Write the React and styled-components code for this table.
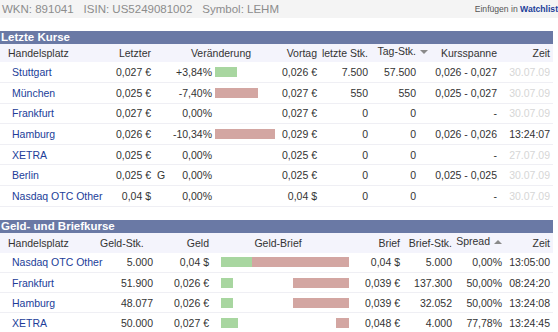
import React from 'react';
import styled, { createGlobalStyle } from 'styled-components';

const GlobalStyle = createGlobalStyle`
  body {
    margin: 0;
    background: #fff;
    font-family: "Liberation Sans", Arial, sans-serif;
    font-size: 10.5px;
    color: #333;
  }
`;

const Page = styled.div`
  width: 558px;
  overflow: hidden;
`;

const TopBar = styled.div`
  display: flex;
  align-items: center;
  justify-content: space-between;
  height: 18px;
  background: #f4f4f4;
  padding-left: 2px;
`;

const Ident = styled.div`
  display: flex;
  gap: 10px;
  color: #8c8c8c;
  font-size: 11.5px;
`;

const Watch = styled.div`
  font-size: 8.6px;
  color: #555;
  white-space: nowrap;
  b {
    color: #213d99;
  }
`;

const Section = styled.section`
  width: 553px;
  margin-top: 13px;
`;

const Band = styled.div`
  height: 13px;
  line-height: 13px;
  background: #6a79a5;
  color: #fff;
  font-weight: bold;
  font-size: 11.5px;
  padding-left: 1px;
`;

const Table = styled.table`
  width: 553px;
  table-layout: fixed;
  border-collapse: collapse;
  border-spacing: 0;
`;

const HeadRow = styled.tr`
  height: ${(p) => p.h}px;
  background: #f4f4fc;
`;

const Th = styled.th`
  font-weight: normal;
  padding: 0 ${(p) => p.pr || 0}px 0 ${(p) => p.pl || 0}px;
  text-align: ${(p) => p.align || 'right'};
  white-space: nowrap;
  vertical-align: ${(p) => (p.raised ? 'top' : 'middle')};
  padding-top: ${(p) => (p.raised ? p.raised : 0)}px;
`;

const Row = styled.tr`
  height: ${(p) => p.h}px;
  border-bottom: 1px solid #efeff4;
`;

const Td = styled.td`
  padding: 0 ${(p) => p.pr || 0}px 0 ${(p) => p.pl || 0}px;
  text-align: ${(p) => p.align || 'right'};
  white-space: nowrap;
  color: ${(p) => (p.faint ? '#d6d6d6' : '#333')};
`;

const Place = styled.a`
  color: #213d99;
  text-decoration: none;
`;

const Bar = styled.div`
  height: 10px;
  background: ${(p) => (p.up ? '#a8d6a0' : '#d3a6a2')};
`;

const Spread = styled.div`
  display: flex;
  justify-content: space-between;
  width: 128px;
`;

const Arrow = styled.span`
  display: inline-block;
  width: 0;
  height: 0;
  margin-left: 4px;
  vertical-align: middle;
  border-left: 4px solid transparent;
  border-right: 4px solid transparent;
  ${(p) =>
    p.up
      ? 'border-bottom: 4px solid #8a8a8a;'
      : 'border-top: 4px solid #8a8a8a; margin-right: -12px;'}
`;

const last = [
  { place: 'Stuttgart', price: '0,027 €', g: '', chg: '+3,84%', bar: 22, up: true, prev: '0,026 €', qty: '7.500', day: '57.500', range: '0,026 - 0,027', time: '30.07.09', old: true },
  { place: 'München', price: '0,025 €', g: '', chg: '-7,40%', bar: 43, up: false, prev: '0,027 €', qty: '550', day: '550', range: '0,025 - 0,027', time: '30.07.09', old: true },
  { place: 'Frankfurt', price: '0,027 €', g: '', chg: '0,00%', bar: 0, prev: '0,027 €', qty: '0', day: '0', range: '-', time: '30.07.09', old: true },
  { place: 'Hamburg', price: '0,026 €', g: '', chg: '-10,34%', bar: 60, up: false, prev: '0,029 €', qty: '0', day: '0', range: '0,026 - 0,026', time: '13:24:07', old: false },
  { place: 'XETRA', price: '0,025 €', g: '', chg: '0,00%', bar: 0, prev: '0,025 €', qty: '0', day: '0', range: '-', time: '27.07.09', old: true },
  { place: 'Berlin', price: '0,025 €', g: 'G', chg: '0,00%', bar: 0, prev: '0,025 €', qty: '0', day: '0', range: '0,025 - 0,025', time: '30.07.09', old: true },
  { place: 'Nasdaq OTC Other', price: '0,04 $', g: '', chg: '0,00%', bar: 0, prev: '0,04 $', qty: '0', day: '0', range: '-', time: '30.07.09', old: true },
];

const quotes = [
  { place: 'Nasdaq OTC Other', bidQty: '5.000', bid: '0,04 $', green: 31, red: 97, ask: '0,04 $', askQty: '5.000', spread: '0,00%', time: '13:05:00' },
  { place: 'Frankfurt', bidQty: '51.900', bid: '0,026 €', green: 12, red: 56, ask: '0,039 €', askQty: '137.300', spread: '50,00%', time: '08:24:20' },
  { place: 'Hamburg', bidQty: '48.077', bid: '0,026 €', green: 12, red: 56, ask: '0,039 €', askQty: '32.052', spread: '50,00%', time: '13:24:08' },
  { place: 'XETRA', bidQty: '50.000', bid: '0,027 €', green: 17, red: 13, ask: '0,048 €', askQty: '4.000', spread: '77,78%', time: '13:24:45' },
];

function LastPrices() {
  return (
    <Section>
      <Band>Letzte Kurse</Band>
      <Table>
        <colgroup>
          {[100, 51, 17, 45, 67, 37, 51, 48, 81, 53, 3].map((w, i) => (
            <col key={i} style={{ width: w }} />
          ))}
        </colgroup>
        <thead>
          <HeadRow h={18}>
            <Th align="left" pl={8}>Handelsplatz</Th>
            <Th>Letzter</Th>
            <Th />
            <Th colSpan={2} align="center" pr={6}>Veränderung</Th>
            <Th>Vortag</Th>
            <Th>letzte Stk.</Th>
            <Th raised={1}>
              Tag-Stk.
              <Arrow />
            </Th>
            <Th>Kursspanne</Th>
            <Th>Zeit</Th>
            <Th />
          </HeadRow>
        </thead>
        <tbody>
          {last.map((r) => (
            <Row key={r.place} h={20.6}>
              <Td align="left" pl={12}>
                <Place href="#">{r.place}</Place>
              </Td>
              <Td>{r.price}</Td>
              <Td align="left" pl={6}>{r.g}</Td>
              <Td pr={1}>{r.chg}</Td>
              <Td align="left" pl={2}>
                {r.bar > 0 && <Bar up={r.up} style={{ width: r.bar }} />}
              </Td>
              <Td>{r.prev}</Td>
              <Td>{r.qty}</Td>
              <Td>{r.day}</Td>
              <Td>{r.range}</Td>
              <Td faint={r.old}>{r.time}</Td>
              <Td />
            </Row>
          ))}
        </tbody>
      </Table>
    </Section>
  );
}

function BidAsk() {
  return (
    <Section>
      <Band>Geld- und Briefkurse</Band>
      <Table>
        <colgroup>
          {[100, 53, 56, 12, 128, 51, 52, 50, 48, 3].map((w, i) => (
            <col key={i} style={{ width: w }} />
          ))}
        </colgroup>
        <thead>
          <HeadRow h={20}>
            <Th align="left" pl={8}>Handelsplatz</Th>
            <Th pr={19}>Geld-Stk.</Th>
            <Th>Geld</Th>
            <Th colSpan={2} align="center" pr={2}>Geld-Brief</Th>
            <Th>Brief</Th>
            <Th>Brief-Stk.</Th>
            <Th raised={2}>
              Spread
              <Arrow up />
            </Th>
            <Th>Zeit</Th>
            <Th />
          </HeadRow>
        </thead>
        <tbody>
          {quotes.map((r) => (
            <Row key={r.place} h={20}>
              <Td align="left" pl={12}>
                <Place href="#">{r.place}</Place>
              </Td>
              <Td>{r.bidQty}</Td>
              <Td>{r.bid}</Td>
              <Td />
              <Td align="left">
                <Spread>
                  <Bar up style={{ width: r.green }} />
                  <Bar style={{ width: r.red }} />
                </Spread>
              </Td>
              <Td>{r.ask}</Td>
              <Td>{r.askQty}</Td>
              <Td>{r.spread}</Td>
              <Td>{r.time}</Td>
              <Td />
            </Row>
          ))}
        </tbody>
      </Table>
    </Section>
  );
}

export default function App() {
  return (
    <Page>
      <GlobalStyle />
      <TopBar>
        <Ident>
          <span>WKN: 891041</span>
          <span>ISIN: US5249081002</span>
          <span>Symbol: LEHM</span>
        </Ident>
        <Watch>
          Einfügen in <b>Watchlist</b>
        </Watch>
      </TopBar>
      <LastPrices />
      <BidAsk />
    </Page>
  );
}
